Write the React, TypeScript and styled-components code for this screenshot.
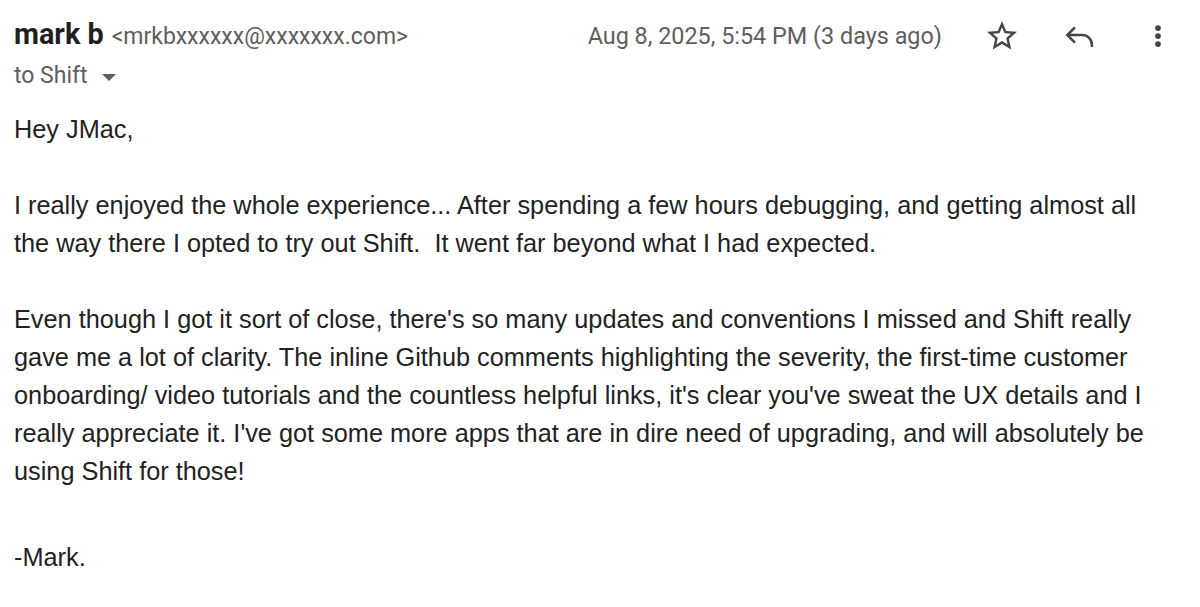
import React from 'react'
import styled, { createGlobalStyle } from 'styled-components'

const GlobalStyle = createGlobalStyle`
	html, body {
		margin: 0;
		padding: 0;
		background: #FFFFFF;
	}
`

const Wrapper = styled.div`
	width: 1200px;
	height: 607px;
	box-sizing: border-box;
	padding: 16px 14px 0 14px;
	background: #FFFFFF;
	overflow: hidden;
`
const Head = styled.div`
	display: flex;
	justify-content: space-between;
	align-items: flex-start;
`
const Sender = styled.div`
	display: flex;
	flex-direction: column;
	gap: 6px;
`
const NameLine = styled.div`
	display: flex;
	align-items: baseline;
	gap: 8px;
	font-family: Roboto, 'Noto Sans', sans-serif;
	line-height: 36px;
`
const Name = styled.span`
	font-weight: 700;
	font-size: 28.8px;
	color: #1F1F1F;
`
const Email = styled.span`
	font-size: 23px;
	color: #5E5E5E;
`
const ToLine = styled.div`
	display: flex;
	align-items: center;
	gap: 14px;
	font-family: Roboto, 'Noto Sans', sans-serif;
	font-size: 23px;
	line-height: 30px;
	color: #5E5E5E;
`
const Caret = styled.span`
	width: 0;
	height: 0;
	margin-top: 2px;
	border-left: 7px solid transparent;
	border-right: 7px solid transparent;
	border-top: 7px solid #5E5E5E;
`
const Meta = styled.div`
	display: flex;
	align-items: center;
	gap: 22px;
	height: 40px;
`
const Date = styled.span`
	font-family: Roboto, 'Noto Sans', sans-serif;
	font-size: 23.4px;
	line-height: 32px;
	color: #5E5E5E;
	margin-right: 10px;
`
const IconButton = styled.div`
	width: 56px;
	height: 40px;
	display: flex;
	align-items: center;
	justify-content: center;
	color: #444746;
`
const Body = styled.div`
	margin-top: 19px;
	font-family: 'Liberation Sans', Arial, sans-serif;
	font-size: 25.3px;
	line-height: 38px;
	color: #222222;
`
const Para = styled.p`
	margin: 0 0 38px 0;
	white-space: nowrap;
`
const Signature = styled.p`
	margin: 48px 0 0 0;
`

const StarIcon = () => (
	<svg width="36" height="36" viewBox="0 0 24 24" fill="currentColor">
		<path d="M22 9.24l-7.19-.62L12 2 9.19 8.63 2 9.24l5.46 4.73L5.82 21 12 17.27 18.18 21l-1.63-7.03L22 9.24zM12 15.4l-3.76 2.27 1-4.28-3.32-2.88 4.38-.38L12 6.1l1.71 4.04 4.38.38-3.32 2.88 1 4.28L12 15.4z" />
	</svg>
)

const ReplyIcon = () => (
	<svg width="38" height="38" viewBox="0 0 24 24" fill="none" stroke="currentColor" strokeWidth="1.6">
		<path d="M8.8 6.6 4 11.4 8.8 16.2" />
		<path d="M4.2 11.4h9.3a6 6 0 0 1 6 6v1.6" />
	</svg>
)

const MoreIcon = () => (
	<svg width="30" height="30" viewBox="0 0 24 24" fill="currentColor">
		<circle cx="12" cy="5.6" r="2.3" />
		<circle cx="12" cy="12" r="2.3" />
		<circle cx="12" cy="18.4" r="2.3" />
	</svg>
)

const App = () => {
	return (
		<Wrapper>
			<GlobalStyle />
			<Head>
				<Sender>
					<NameLine>
						<Name>mark b</Name>
						<Email>&lt;mrkbxxxxxx@xxxxxxx.com&gt;</Email>
					</NameLine>
					<ToLine>
						to Shift
						<Caret />
					</ToLine>
				</Sender>
				<Meta>
					<Date>Aug 8, 2025, 5:54 PM (3 days ago)</Date>
					<IconButton><StarIcon /></IconButton>
					<IconButton><ReplyIcon /></IconButton>
					<IconButton><MoreIcon /></IconButton>
				</Meta>
			</Head>
			<Body>
				<Para>Hey JMac,</Para>
				<Para>
					I really enjoyed the whole experience... After spending a few hours debugging, and getting almost all<br />
					the way there I opted to try out Shift.&nbsp; It went far beyond what I had expected.
				</Para>
				<Para>
					Even though I got it sort of close, there's so many updates and conventions I missed and Shift really<br />
					gave me a lot of clarity. The inline Github comments highlighting the severity, the first-time customer<br />
					onboarding/ video tutorials and the countless helpful links, it's clear you've sweat the UX details and I<br />
					really appreciate it. I've got some more apps that are in dire need of upgrading, and will absolutely be<br />
					using Shift for those!
				</Para>
				<Signature>-Mark.</Signature>
			</Body>
		</Wrapper>
	)
}

export default App
